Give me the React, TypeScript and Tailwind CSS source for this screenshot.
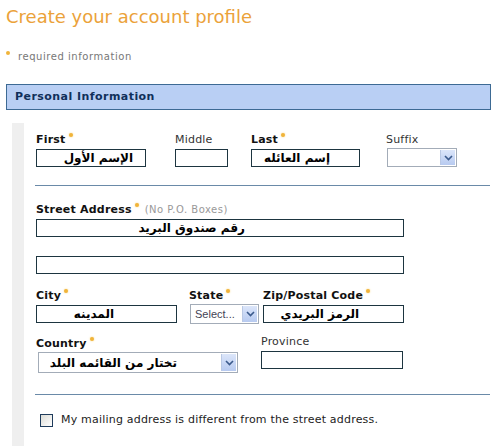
import React from "react";

const V = { fontFamily: '"DejaVu Sans", Verdana, sans-serif' };
const AR = { fontFamily: '"DejaVu Sans", "Noto Sans", sans-serif' };

function Star() {
  return <span className="inline-block w-[4px] h-[4px] rounded-full bg-[#f0b43a] ml-[3px] relative top-[-6px] shadow-[0_0_2px_#f7d27a]" />;
}

function Label({ children, req, bold = true, extra }: { children: React.ReactNode; req?: boolean; bold?: boolean; extra?: string }) {
  return (
    <div className={`h-[16px] text-[11px] leading-[16px] whitespace-nowrap tracking-[0.2px] ${bold ? "font-bold text-[#111]" : "text-[#333]"}`} style={V}>
      {children}
      {req && <Star />}
      {extra && <span className="font-normal text-[#999] text-[10px] ml-[6px] tracking-[0.5px]">{extra}</span>}
    </div>
  );
}

function TextBox({ w, value, pr = 4, h = 18 }: { w: number; value?: string; pr?: number; h?: number }) {
  return (
    <div
      className="border border-[#1d3540] bg-white flex items-center justify-end text-[12px] font-bold text-black overflow-hidden whitespace-nowrap"
      style={{ width: w, height: h, paddingRight: pr, ...AR }}
      dir="ltr"
    >
      {value && <span dir="rtl">{value}</span>}
    </div>
  );
}

function Arrow() {
  return (
    <div className="w-[15px] h-full bg-gradient-to-b from-[#dce6fa] to-[#b7caf0] border-l border-[#b9c8e4] flex items-center justify-center">
      <svg width="9" height="6" viewBox="0 0 9 6">
        <path d="M1 1 L4.5 4.5 L8 1" stroke="#3b5a8c" strokeWidth="1.6" fill="none" />
      </svg>
    </div>
  );
}

function SelectBox({ w, h = 19, children }: { w: number; h?: number; children?: React.ReactNode }) {
  return (
    <div className="border border-[#a3acb8] bg-white flex items-stretch p-[1px]" style={{ width: w, height: h }}>
      <div className="flex-1 flex items-center overflow-hidden whitespace-nowrap">{children}</div>
      <Arrow />
    </div>
  );
}

export default function App() {
  return (
    <div className="w-[494px] h-[446px] bg-white overflow-hidden relative" style={V}>
      <div className="pl-[6px] pt-[4px] h-[26px] text-[18px] leading-[26px] text-[#eba23a]">Create your account profile</div>
      <div className="mt-[22px] pl-[6px] flex items-center h-[16px] text-[10px] text-[#777] tracking-[0.55px]">
        <span className="w-[4px] h-[4px] rounded-full bg-[#f0b43a] relative top-[-3px]" />
        <span className="ml-[8px]">required information</span>
      </div>
      <div className="mt-[20px] ml-[6px] mr-[3px] h-[26px] bg-[#b9cff4] border border-[#3d6a94] flex items-center pl-[8px] text-[11px] font-bold text-[#10305a] tracking-[0.45px]">
        Personal Information
      </div>
      <div className="flex mt-[13px]">
        <div className="ml-[12px] w-[12px] h-[330px] bg-[#efefef]" />
        <div className="flex-1">
          {/* Row 1 */}
          <div className="flex pl-[12px] pt-[9px]">
            <div className="w-[110px]">
              <Label req>First</Label>
              <div className="mt-[1px]"><TextBox w={110} value="الإسم الأول" pr={12} /></div>
            </div>
            <div className="ml-[29px] w-[53px]">
              <Label bold={false}>Middle</Label>
              <div className="mt-[1px]"><TextBox w={53} /></div>
            </div>
            <div className="ml-[23px] w-[109px]">
              <Label req>Last</Label>
              <div className="mt-[1px]"><TextBox w={109} value="إسم العائله" pr={29} /></div>
            </div>
            <div className="ml-[26px]">
              <Label bold={false}>Suffix</Label>
              <div className="mt-[0px] ml-[1px]"><SelectBox w={70} h={19} /></div>
            </div>
          </div>
          <div className="ml-[11px] mr-[4px] mt-[18px] border-t border-[#6a8aa8]" />
          {/* Street */}
          <div className="pl-[12px] pt-[16px]">
            <Label req extra="(No P.O. Boxes)">Street Address</Label>
            <div className="mt-[1px]"><TextBox w={368} value="رقم صندوق البريد" pr={158} /></div>
            <div className="mt-[19px]"><TextBox w={368} /></div>
          </div>
          {/* City row */}
          <div className="flex pl-[12px] pt-[14px]">
            <div className="w-[141px]">
              <Label req>City</Label>
              <div className="mt-[1px]"><TextBox w={141} value="المدينه" pr={62} /></div>
            </div>
            <div className="ml-[12px]">
              <Label req>State</Label>
              <div className="ml-[1px]">
                <SelectBox w={69} h={20}>
                  <span className="text-[11px] text-[#445] pl-[3px]" style={{ fontFamily: '"Liberation Sans", Arial, sans-serif' }}>Select...</span>
                </SelectBox>
              </div>
            </div>
            <div className="ml-[4px]">
              <Label req>Zip/Postal Code</Label>
              <div className="mt-[1px]"><TextBox w={141} value="الرمز البريدي" pr={44} /></div>
            </div>
          </div>
          {/* Country row */}
          <div className="flex pl-[12px] pt-[12px]">
            <div className="w-[225px]">
              <Label req>Country</Label>
              <div className="ml-[2px] mt-[0px]">
                <SelectBox w={200} h={21}>
                  <span className="w-full text-right pr-[44px] text-[12px] font-bold text-black" dir="rtl" style={AR}>تختار من القائمه البلد</span>
                </SelectBox>
              </div>
            </div>
            <div className="-mt-[2px]">
              <Label bold={false}>Province</Label>
              <div className="mt-[1px]"><TextBox w={142} /></div>
            </div>
          </div>
          <div className="ml-[11px] mr-[4px] mt-[21px] border-t border-[#6a8aa8]" />
          {/* Checkbox */}
          <div className="flex items-center pl-[16px] pt-[17px]">
            <div className="w-[13px] h-[13px] border border-[#1f3c5c] bg-gradient-to-br from-[#dcdcd6] to-white" />
            <span className="ml-[8px] text-[11px] text-[#222] tracking-[0.2px]">My mailing address is different from the street address.</span>
          </div>
        </div>
      </div>
    </div>
  );
}
